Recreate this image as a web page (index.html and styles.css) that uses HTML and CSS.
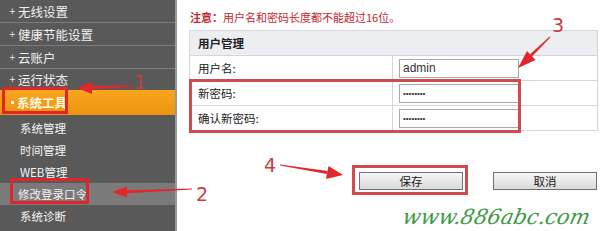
FILE: index.html
```html
<!DOCTYPE html>
<html lang="zh">
<head>
<meta charset="utf-8">
<title>修改登录口令</title>
<link rel="stylesheet" href="styles.css">
</head>
<body>
<div class="page">
  <nav class="sidebar">
    <ul class="menu">
      <li class="item"><span class="plus">+</span>无线设置</li>
      <li class="item"><span class="plus">+</span>健康节能设置</li>
      <li class="item"><span class="plus">+</span>云账户</li>
      <li class="item last"><span class="plus">+</span>运行状态</li>
      <li class="item active"><span class="sq"></span>系统工具</li>
    </ul>
    <ul class="sub">
      <li class="sub-item">系统管理</li>
      <li class="sub-item">时间管理</li>
      <li class="sub-item">WEB管理</li>
      <li class="sub-item hl">修改登录口令</li>
      <li class="sub-item">系统诊断</li>
    </ul>
  </nav>
  <main class="content">
    <p class="note"><b>注意：</b>用户名和密码长度都不能超过16位。</p>
    <table class="form">
      <tr><th colspan="2">用户管理</th></tr>
      <tr><td class="lbl">用户名:</td><td class="val"><input class="field" type="text" value="admin"></td></tr>
      <tr><td class="lbl">新密码:</td><td class="val"><input class="field" type="password" value="12345678"></td></tr>
      <tr><td class="lbl">确认新密码:</td><td class="val"><input class="field" type="password" value="12345678"></td></tr>
    </table>
    <div class="buttons">
      <button class="btn">保存</button>
      <button class="btn">取消</button>
    </div>
    <div class="watermark">www.886abc.com</div>
  </main>

  <div class="mark mark-tools"></div>
  <div class="mark mark-pass"></div>
  <div class="mark mark-rows"></div>
  <div class="mark mark-save"></div>

  <svg class="annot" width="600" height="231" viewBox="0 0 600 231">
    <g class="arrow">
      <polygon points="91,86 133,85.3 133,86.7 91,89.2"/>
      <polygon points="77,88 92,82 92,94"/>
      <polygon points="127,190.3 192,188.4 192,189.6 127,193.3"/>
      <polygon points="112,192 127,186.5 127,197.5"/>
      <polygon points="532,56.6 550.3,37.4 549.7,36.6 529.9,54.4"/>
      <polygon points="518,68 535.5,60 527,51"/>
      <polygon points="280,164.5 327.5,171 327,174 280,165.5"/>
      <polygon points="343,175 326,179 328.5,166"/>
    </g>
    <g class="nums">
      <text x="134" y="89">1</text>
      <text x="196" y="201">2</text>
      <text x="552" y="32">3</text>
      <text x="264" y="172">4</text>
    </g>
  </svg>
</div>
</body>
</html>
```

FILE: styles.css
```css
* { box-sizing: border-box; }
html, body { margin: 0; padding: 0; background: #ffffff; }
body {
  width: 600px;
  height: 231px;
  overflow: hidden;
  font-family: "Noto Sans CJK SC", "Liberation Sans", sans-serif;
}
.page {
  position: relative;
  display: flex;
  width: 600px;
  height: 231px;
}
.sidebar {
  width: 177px;
  flex: none;
  background: #595959;
  border-right: 2px solid #9a9a9a;
  color: #ffffff;
}
.menu, .sub {
  list-style: none;
  margin: 0;
  padding: 0;
}
.item {
  height: 23px;
  border-bottom: 1px solid #7c7c7c;
  display: flex;
  align-items: center;
  padding-left: 9px;
  font-size: 12.5px;
  color: #f0f0f0;
}
.item.last { height: 21px; border-bottom: none; }
.plus {
  font-family: "DejaVu Sans", sans-serif;
  font-size: 8px;
  width: 8px;
  margin-right: 1px;
}
.item.active {
  height: 25px;
  background: linear-gradient(#f8a51e, #ef9410);
  border-bottom: none;
  font-weight: bold;
  color: #fffbe8;
}
.sq {
  width: 3px;
  height: 3px;
  background: #ffffff;
  margin-left: 2px;
  margin-right: 3px;
}
.sub { padding-top: 2px; }
.sub-item {
  height: 22px;
  display: flex;
  align-items: center;
  padding-left: 20px;
  font-size: 11.5px;
  color: #f4f4f4;
}
.sub-item.hl {
  background: #7a7a7a;
  padding-left: 18px;
}
.content {
  flex: 1;
  min-width: 0;
  padding-left: 12px;
}
.note {
  margin: 9px 0 0 1px;
  height: 16px;
  font-size: 11px;
  line-height: 16px;
  color: #c4262f;
}
.note b { font-weight: bold; }
.form {
  margin-top: 5px;
  width: 409px;
  border-collapse: collapse;
  font-size: 11.5px;
  color: #222;
}
.form th {
  height: 25px;
  text-align: left;
  padding: 0 0 0 8px;
  background: #eceef1;
  border: 1px solid #d4d6da;
  font-weight: bold;
}
.form td {
  height: 25px;
  border: 1px solid #d4d6da;
  padding: 0;
}
.lbl { width: 203px; padding-left: 8px !important; }
.val { padding-left: 6px !important; }
.field {
  display: block;
  width: 120px;
  height: 19px;
  border: 1px solid #a9a9a9;
  padding: 0 3px;
  font-family: "Liberation Sans", sans-serif;
  font-size: 12px;
  color: #333;
  background: #fff;
}
input[type="password"] { font-size: 8px; }
.buttons {
  display: flex;
  gap: 30px;
  margin-top: 41px;
  margin-left: 170px;
}
.btn {
  width: 104px;
  height: 18px;
  padding: 0;
  border: 1px solid #707070;
  background: linear-gradient(#f6f6f6, #dadada);
  font-family: "Noto Sans CJK SC", sans-serif;
  font-size: 11.5px;
  line-height: 16px;
  color: #222;
}
.watermark {
  margin: 15px 0 0 214px;
  font-family: "DejaVu Serif", "Liberation Serif", serif;
  font-style: italic;
  font-size: 21px;
  line-height: 24px;
  color: #3d9a44;
  white-space: nowrap;
  transform: skewX(-12deg);
}
.mark {
  position: absolute;
  border: 3px solid #e0262b;
}
.mark-tools { left: 2px; top: 87px; width: 66px; height: 27px; }
.mark-pass { left: 10px; top: 178px; width: 79px; height: 26px; }
.mark-rows { left: 189px; top: 79px; width: 332px; height: 54px; border-color: #d04a4f; }
.mark-save { left: 352px; top: 165px; width: 116px; height: 30px; border-color: #d04a4f; }
.annot {
  position: absolute;
  left: 0;
  top: 0;
  pointer-events: none;
}
.arrow polygon { fill: #e3262b; }
.nums text {
  font-family: "DejaVu Sans", sans-serif;
  font-size: 19px;
  fill: #c93c43;
}
```
